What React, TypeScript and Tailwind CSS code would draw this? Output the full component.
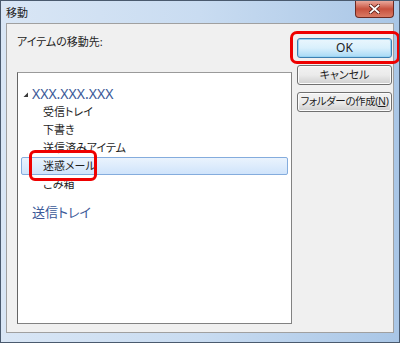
import React from 'react';

const jp = "font-['Noto_Sans','Noto_Sans_CJK_JP',sans-serif] [font-feature-settings:'palt']";

function Btn({ children, primary }: { children: React.ReactNode; primary?: boolean }) {
  return (
    <div
      className={
        'h-[20px] w-[95px] flex items-center justify-center whitespace-nowrap rounded-[3px] border text-[11px] text-[#1e1e1e] ' +
        (primary
          ? 'border-[#3c7fb1] bg-gradient-to-b from-[#eaf6fd] via-[#d9f0fc] to-[#a7d9f5] shadow-[inset_0_0_0_1px_#9ad4f2]'
          : 'border-[#707070] bg-gradient-to-b from-[#f2f2f2] via-[#ebebeb] to-[#cfcfcf] shadow-[inset_0_0_0_1px_#fcfcfc]')
      }
    >
      {children}
    </div>
  );
}

function TreeRow({ label, selected }: { label: string; selected?: boolean }) {
  return (
    <div
      className={
        'h-[18px] flex items-center pl-[21px] mx-[3px] rounded-[2px] text-[11px] text-[#1e1e1e] ' +
        (selected ? 'border border-[#84acdd] bg-gradient-to-b from-[#eaf3fd] to-[#d0e4fb]' : 'border border-transparent')
      }
    >
      {label}
    </div>
  );
}

export default function App() {
  return (
    <div className={'relative w-[400px] h-[343px] overflow-hidden border border-[#4a5a6e] bg-gradient-to-r from-[#d9e6f5] via-[#c9dcf1] to-[#a9c6e6] ' + jp}>
      {/* title bar */}
      <div className="h-[22px] flex items-center justify-between pl-[5px] pr-[5px]">
        <span className="text-[11px] text-[#1e1e1e] mt-[2px]">移動</span>
        <div className="self-start w-[39px] h-[17px] rounded-b-[4px] border border-t-0 border-[#6b2a22] bg-gradient-to-b from-[#e9a79b] via-[#c7503d] to-[#d97a64] flex items-center justify-center">
          <svg width="11" height="10" viewBox="0 0 11 10">
            <path d="M1.5 1.5 L9.5 8.5 M9.5 1.5 L1.5 8.5" stroke="#5a1c14" strokeWidth="3.4" strokeLinecap="square" />
            <path d="M1.5 1.5 L9.5 8.5 M9.5 1.5 L1.5 8.5" stroke="#ffffff" strokeWidth="1.8" strokeLinecap="square" />
          </svg>
        </div>
      </div>

      {/* client area */}
      <div className="mx-[5px] h-[310px] border border-[#a0a0a0] bg-[#f0f0f0] flex pl-[10px] pt-[10px]">
        <div className="w-[275px] flex flex-col">
          <div className="h-[16px] text-[11px] leading-[16px] text-[#1e1e1e]">アイテムの移動先:</div>
          <div className="mt-[22px] h-[252px] border border-[#828282] border-l-[#646464] border-t-[#9a9a9a] bg-white pt-[12px]">
            <div className="h-[18px] flex items-center pl-[5px]">
              <svg width="6" height="6" viewBox="0 0 6 6" className="mr-[3px] mt-[1px]">
                <path d="M5 0.5 L5 5 L0.5 5 Z" fill="#3a3a3a" />
              </svg>
              <span className="text-[14px] text-[#3b5998] font-['Noto_Sans',sans-serif] leading-none">XXX.XXX.XXX</span>
            </div>
            <TreeRow label="受信トレイ" />
            <TreeRow label="下書き" />
            <TreeRow label="送信済みアイテム" />
            <TreeRow label="迷惑メール" selected />
            <TreeRow label="ごみ箱" />
            <div className="mt-[10px] h-[20px] flex items-center pl-[14px] text-[13px] text-[#3b5998]">送信トレイ</div>
          </div>
        </div>
        <div className="ml-[5px] mt-[4px] flex flex-col gap-[7px]">
          <Btn primary>
            <span className="font-['Noto_Sans',sans-serif] text-[12px]">OK</span>
          </Btn>
          <Btn>キャンセル</Btn>
          <Btn>
            <span className="tracking-[-0.4px] text-[10.5px]">
              フォルダーの作成(<span className="underline">N</span>)
            </span>
          </Btn>
        </div>
      </div>

      {/* red highlights */}
      <div className="absolute left-[289px] top-[30px] w-[110px] h-[33px] rounded-[7px] border-[3px] border-[#ee0000]" />
      <div className="absolute left-[28px] top-[149px] w-[68px] h-[31px] rounded-[6px] border-[3px] border-[#ee0000]" />
    </div>
  );
}
